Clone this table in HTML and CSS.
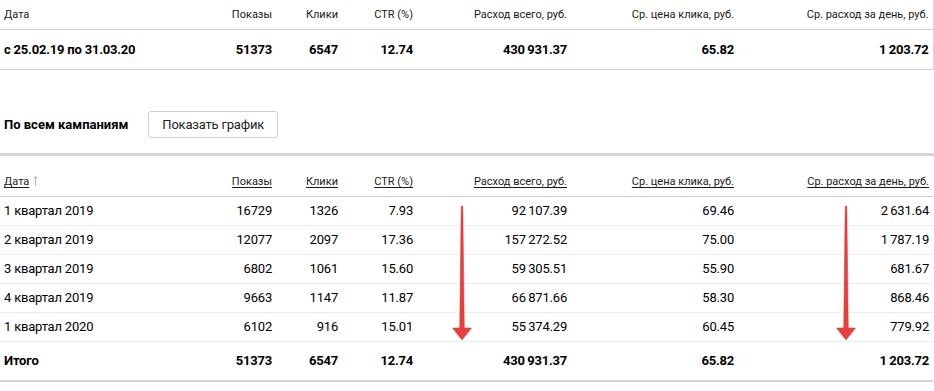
FILE: index.html
```html
<!DOCTYPE html>
<html lang="ru">
<head>
<meta charset="utf-8">
<link rel="stylesheet" href="styles.css">
</head>
<body>
<table class="stat summary">
  <colgroup>
    <col class="c1"><col class="c2"><col class="c3"><col class="c4"><col class="c5"><col class="c6"><col class="c7">
  </colgroup>
  <thead>
    <tr class="head">
      <th class="left">Дата</th><th>Показы</th><th>Клики</th><th>CTR (%)</th><th>Расход всего, руб.</th><th>Ср. цена клика, руб.</th><th>Ср. расход за день, руб.</th>
    </tr>
  </thead>
  <tbody>
    <tr class="total">
      <td class="left">с 25.02.19 по 31.03.20</td><td>51373</td><td>6547</td><td>12.74</td><td>430&#8201;931.37</td><td>65.82</td><td>1&#8201;203.72</td>
    </tr>
  </tbody>
</table>

<div class="toolbar">
  <span class="title">По всем кампаниям</span>
  <button class="btn">Показать график</button>
</div>

<div class="detail-wrap">
<table class="stat detail">
  <colgroup>
    <col class="c1"><col class="c2"><col class="c3"><col class="c4"><col class="c5"><col class="c6"><col class="c7">
  </colgroup>
  <thead>
    <tr class="head">
      <th class="left"><a>Дата</a><svg class="sort" width="5" height="10" viewBox="0 0 5 10"><path d="M2.5 0.5 L2.5 10 M0.5 2.8 L2.5 0.5 L4.5 2.8" fill="none" stroke="#a8b8cc" stroke-width="1"/></svg></th><th><a>Показы</a></th><th><a>Клики</a></th><th><a>CTR (%)</a></th><th><a>Расход всего, руб.</a></th><th><a>Ср. цена клика, руб.</a></th><th><a>Ср. расход за день, руб.</a></th>
    </tr>
  </thead>
  <tbody>
    <tr class="row"><td class="left">1 квартал 2019</td><td>16729</td><td>1326</td><td>7.93</td><td>92&#8201;107.39</td><td>69.46</td><td>2&#8201;631.64</td></tr>
    <tr class="row"><td class="left">2 квартал 2019</td><td>12077</td><td>2097</td><td>17.36</td><td>157&#8201;272.52</td><td>75.00</td><td>1&#8201;787.19</td></tr>
    <tr class="row"><td class="left">3 квартал 2019</td><td>6802</td><td>1061</td><td>15.60</td><td>59&#8201;305.51</td><td>55.90</td><td>681.67</td></tr>
    <tr class="row"><td class="left">4 квартал 2019</td><td>9663</td><td>1147</td><td>11.87</td><td>66&#8201;871.66</td><td>58.30</td><td>868.46</td></tr>
    <tr class="row"><td class="left">1 квартал 2020</td><td>6102</td><td>916</td><td>15.01</td><td>55&#8201;374.29</td><td>60.45</td><td>779.92</td></tr>
    <tr class="total"><td class="left">Итого</td><td>51373</td><td>6547</td><td>12.74</td><td>430&#8201;931.37</td><td>65.82</td><td>1&#8201;203.72</td></tr>
  </tbody>
</table>
<svg class="arrow arrow-a" width="24" height="136" viewBox="0 0 24 136">
  <path d="M11.2 0 L12.8 0 L14.3 122 L21.5 122 L12 134 L2.5 122 L9.7 122 Z" fill="#e8403a" stroke="#cf3a33" stroke-width="0.5"/>
</svg>
<svg class="arrow arrow-b" width="24" height="136" viewBox="0 0 24 136">
  <path d="M11.2 0 L12.8 0 L14.3 122 L21.5 122 L12 134 L2.5 122 L9.7 122 Z" fill="#e8403a" stroke="#cf3a33" stroke-width="0.5"/>
</svg>
</div>
</body>
</html>
```

FILE: styles.css
```css
html, body {
  margin: 0;
  padding: 0;
  background: #fff;
}
body {
  font-family: Roboto, "Noto Sans", Arial, sans-serif;
  color: #000;
  width: 934px;
}
.stat {
  border-collapse: collapse;
  table-layout: fixed;
  width: 933px;
}
.c1 { width: 200px; }
.c2 { width: 76px; }
.c3 { width: 66px; }
.c4 { width: 75px; }
.c5 { width: 154px; }
.c6 { width: 167px; }
.c7 { width: 195px; }

.stat th, .stat td {
  padding: 0 4px;
  text-align: right;
  white-space: nowrap;
}
.stat .left { text-align: left; }
.stat th {
  font-weight: normal;
  font-size: 11px;
  color: #1a1a1a;
}
.summary {
  border-right: 1px solid #d6d6d6;
}
.summary .head th {
  height: 29px;
  border-bottom: 1px solid #cfcfcf;
}
.summary .total td {
  height: 39px;
  border-bottom: 1px solid #cfcfcf;
}
.total td {
  font-weight: bold;
  font-size: 13px;
  letter-spacing: -0.2px;
}

.toolbar {
  display: flex;
  align-items: center;
  gap: 20px;
  padding: 40px 0 0 4px;
  height: 28px;
}
.title {
  font-size: 13px;
  font-weight: bold;
}
.btn {
  font-family: inherit;
  font-size: 13px;
  letter-spacing: -0.2px;
  color: #222;
  background: #fff;
  border: 1px solid #cfcfcf;
  border-radius: 3px;
  height: 27px;
  padding: 0 13px;
}

.detail-wrap {
  position: relative;
  margin-top: 15px;
  border-top: 3px solid #d4d4d4;
  width: 934px;
}
.detail .head th {
  height: 40px;
  vertical-align: middle;
  border-bottom: 1px solid #cfcfcf;
  padding-top: 12px;
  box-sizing: border-box;
}
.detail .head a {
  color: #1a1a1a;
  text-decoration: underline;
  text-underline-offset: 2px;
}
.sort {
  margin-left: 4px;
  vertical-align: -1px;
}
.detail .row td {
  height: 28px;
  font-size: 13px;
  letter-spacing: -0.2px;
  border-bottom: 1px solid #ebebf1;
}
.detail .total td {
  height: 38px;
  border-bottom: 2px solid #d2d2d2;
}
.arrow {
  position: absolute;
  top: 50px;
}
.arrow-a { left: 450px; }
.arrow-b { left: 834px; }
```
